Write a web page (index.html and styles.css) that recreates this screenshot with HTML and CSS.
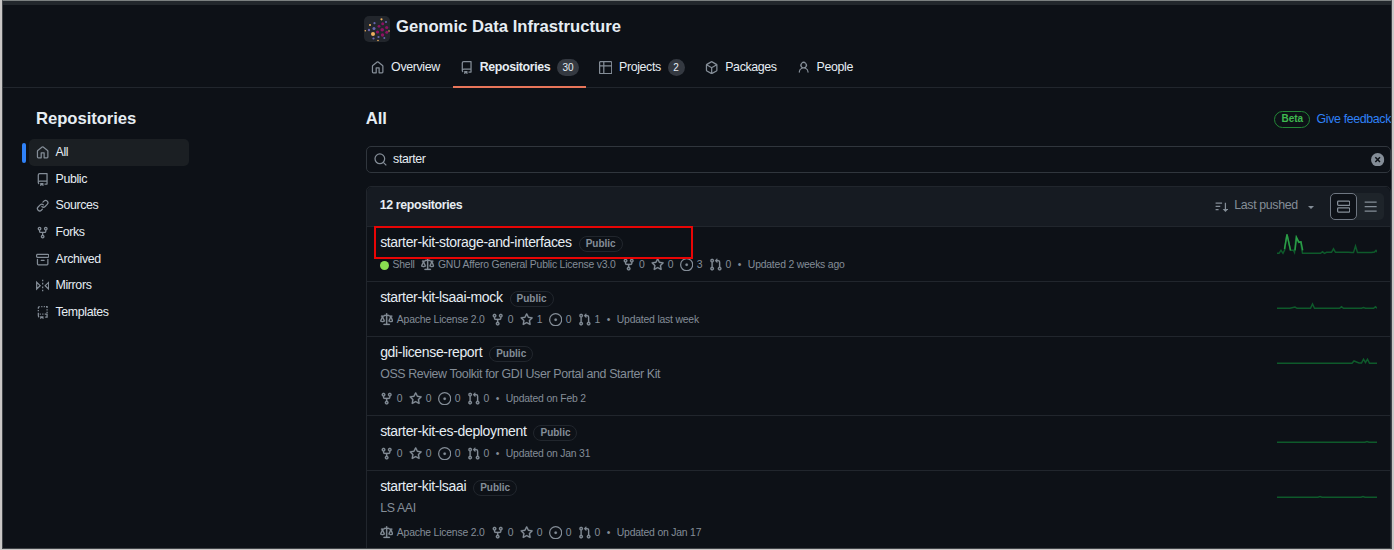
FILE: index.html
```
<!DOCTYPE html>
<html lang="en">
<head>
<meta charset="utf-8">
<title>Genomic Data Infrastructure repositories</title>
<link rel="stylesheet" href="styles.css">
</head>
<body>
<svg class="defs" aria-hidden="true">
<symbol id="home" viewBox="0 0 16 16"><path d="M6.906.664a1.749 1.749 0 0 1 2.187 0l5.25 4.2c.415.332.657.835.657 1.367v7.019A1.75 1.75 0 0 1 13.25 15h-3.5a.75.75 0 0 1-.75-.75V9H7v5.25a.75.75 0 0 1-.75.75h-3.5A1.75 1.75 0 0 1 1 13.25V6.23c0-.531.242-1.034.657-1.366l5.25-4.2Zm1.25 1.171a.25.25 0 0 0-.312 0l-5.25 4.2a.25.25 0 0 0-.094.196v7.019c0 .138.112.25.25.25H5.5V8.25a.75.75 0 0 1 .75-.75h3.5a.75.75 0 0 1 .75.75v5.25h2.75a.25.25 0 0 0 .25-.25V6.23a.25.25 0 0 0-.094-.195Z"/></symbol>
<symbol id="repo" viewBox="0 0 16 16"><path d="M2 2.5A2.5 2.5 0 0 1 4.5 0h8.75a.75.75 0 0 1 .75.75v12.5a.75.75 0 0 1-.75.75h-2.5a.75.75 0 0 1 0-1.5h1.75v-2h-8a1 1 0 0 0-.714 1.7.75.75 0 1 1-1.072 1.05A2.495 2.495 0 0 1 2 11.5Zm10.5-1h-8a1 1 0 0 0-1 1v6.708A2.486 2.486 0 0 1 4.5 9h8ZM5 12.25a.25.25 0 0 1 .25-.25h3.5a.25.25 0 0 1 .25.25v3.25a.25.25 0 0 1-.4.2l-1.45-1.087a.249.249 0 0 0-.3 0L5.4 15.7a.25.25 0 0 1-.4-.2Z"/></symbol>
<symbol id="table" viewBox="0 0 16 16"><path d="M0 1.75C0 .784.784 0 1.75 0h12.5C15.216 0 16 .784 16 1.75v12.5A1.75 1.75 0 0 1 14.25 16H1.75A1.75 1.75 0 0 1 0 14.25ZM6.5 6.5v8h7.75a.25.25 0 0 0 .25-.25V6.5Zm8-1.5V1.75a.25.25 0 0 0-.25-.25H6.5V5Zm-13 1.5v7.75c0 .138.112.25.25.25H5v-8ZM5 5V1.5H1.75a.25.25 0 0 0-.25.25V5Z"/></symbol>
<symbol id="package" viewBox="0 0 16 16"><path d="m8.878.392 5.25 3.045c.54.314.872.89.872 1.514v6.098a1.75 1.75 0 0 1-.872 1.514l-5.25 3.045a1.75 1.75 0 0 1-1.756 0l-5.25-3.045A1.75 1.75 0 0 1 1 11.049V4.951c0-.624.332-1.201.872-1.514L7.122.392a1.75 1.75 0 0 1 1.756 0ZM7.875 1.69l-4.63 2.685L8 7.133l4.755-2.758-4.63-2.685a.248.248 0 0 0-.25 0ZM2.5 5.677v5.372c0 .09.047.171.125.216l4.625 2.683V8.432Zm6.25 8.271 4.625-2.683a.25.25 0 0 0 .125-.216V5.677L8.75 8.432Z"/></symbol>
<symbol id="person" viewBox="0 0 16 16"><path d="M10.561 8.073a6.005 6.005 0 0 1 3.432 5.142.75.75 0 1 1-1.498.07 4.5 4.5 0 0 0-8.99 0 .75.75 0 0 1-1.498-.07 6.004 6.004 0 0 1 3.431-5.142 3.999 3.999 0 1 1 5.123 0ZM10.5 5a2.5 2.5 0 1 0-5 0 2.5 2.5 0 0 0 5 0Z"/></symbol>
<symbol id="link" viewBox="0 0 16 16"><path d="m7.775 3.275 1.25-1.25a3.5 3.5 0 1 1 4.95 4.95l-2.5 2.5a3.5 3.5 0 0 1-4.95 0 .751.751 0 0 1 .018-1.042.751.751 0 0 1 1.042-.018 1.998 1.998 0 0 0 2.83 0l2.5-2.5a2.002 2.002 0 0 0-2.83-2.83l-1.25 1.25a.751.751 0 0 1-1.042-.018.751.751 0 0 1-.018-1.042Zm-4.69 9.64a1.998 1.998 0 0 0 2.83 0l1.25-1.25a.751.751 0 0 1 1.042.018.751.751 0 0 1 .018 1.042l-1.25 1.25a3.5 3.5 0 1 1-4.95-4.95l2.5-2.5a3.5 3.5 0 0 1 4.95 0 .751.751 0 0 1-.018 1.042.751.751 0 0 1-1.042.018 1.998 1.998 0 0 0-2.83 0l-2.5 2.5a1.998 1.998 0 0 0 0 2.83Z"/></symbol>
<symbol id="fork" viewBox="0 0 16 16"><path d="M5 5.372v.878c0 .414.336.75.75.75h4.5a.75.75 0 0 0 .75-.75v-.878a2.25 2.25 0 1 1 1.5 0v.878a2.25 2.25 0 0 1-2.25 2.25h-1.5v2.128a2.251 2.251 0 1 1-1.5 0V8.5h-1.5A2.25 2.25 0 0 1 3.5 6.25v-.878a2.25 2.25 0 1 1 1.5 0ZM5 3.25a.75.75 0 1 0-1.5 0 .75.75 0 0 0 1.5 0Zm6.75.75a.75.75 0 1 0 0-1.5.75.75 0 0 0 0 1.5Zm-3 8.75a.75.75 0 1 0-1.5 0 .75.75 0 0 0 1.5 0Z"/></symbol>
<symbol id="archive" viewBox="0 0 16 16"><path d="M0 2.75C0 1.784.784 1 1.75 1h12.5c.966 0 1.75.784 1.75 1.75v1.5A1.75 1.75 0 0 1 14.25 6H1.75A1.75 1.75 0 0 1 0 4.25ZM1.75 7a.75.75 0 0 1 .75.75v5.5c0 .138.112.25.25.25h10.5a.25.25 0 0 0 .25-.25v-5.5a.75.75 0 0 1 1.5 0v5.5A1.75 1.75 0 0 1 13.25 15H2.75A1.75 1.75 0 0 1 1 13.25v-5.5A.75.75 0 0 1 1.75 7Zm0-4.5a.25.25 0 0 0-.25.25v1.5c0 .138.112.25.25.25h12.5a.25.25 0 0 0 .25-.25v-1.5a.25.25 0 0 0-.25-.25ZM6.25 8h3.5a.75.75 0 0 1 0 1.5h-3.5a.75.75 0 0 1 0-1.5Z"/></symbol>
<symbol id="mirror" viewBox="0 0 16 16"><path class="line" d="M.8 4v8L5 8ZM15.2 4v8L11 8ZM8 1v1.6M8 4.6v2M8 9v2M8 13v1.7"/></symbol>
<symbol id="template" viewBox="0 0 16 16"><path class="line" d="M2.8 3.2V2.500Q2.800.8 4.500.8M6.300.8h1.400M9.300.8h1.400M12 .8h1.300v1.700M13.300 4v1.500M13.300 7v1.500M2.800 4.800v1.500M2.800 8v3.500Q2.800 13 3.800 13.300M4.500 9.800h1.300M7.500 9.800h1.400M10.500 9.800h2.800v3.500h-2.300"/><path d="M5 12.200h4v3.600L7 14.500 5 15.800Z"/></symbol>
<symbol id="law" viewBox="0 0 16 16"><path d="M8.75.75V2h.985c.304 0 .603.08.867.231l1.29.736c.038.022.08.033.124.033h2.234a.75.75 0 0 1 0 1.5h-.427l2.111 4.692a.75.75 0 0 1-.154.838l-.076.069c-.21.176-.441.327-.686.45C14.556 10.78 13.88 11 13 11a4.498 4.498 0 0 1-2.023-.454 3.544 3.544 0 0 1-.686-.45l-.071-.065a.75.75 0 0 1-.154-.838L12.178 4.5h-.162c-.305 0-.604-.079-.868-.231l-1.29-.736a.245.245 0 0 0-.124-.033H8.75V13h2.5a.75.75 0 0 1 0 1.5h-6.5a.75.75 0 0 1 0-1.5h2.5V3.5h-.984a.245.245 0 0 0-.124.033l-1.289.737c-.265.15-.564.23-.869.23h-.162l2.112 4.692a.75.75 0 0 1-.154.838l-.071.065c-.21.176-.441.327-.686.45C4.556 10.78 3.88 11 3 11a4.498 4.498 0 0 1-2.023-.454 3.544 3.544 0 0 1-.686-.45l-.071-.065a.75.75 0 0 1-.154-.838L2.178 4.5H1.75a.75.75 0 0 1 0-1.5h2.234a.249.249 0 0 0 .125-.033l1.288-.737c.265-.15.564-.23.869-.23h.984V.75a.75.75 0 0 1 1.5 0Zm2.945 8.477c.285.135.718.273 1.305.273s1.02-.138 1.305-.273L13 6.327Zm-10 0c.285.135.718.273 1.305.273s1.02-.138 1.305-.273L3 6.327Z"/></symbol>
<symbol id="star" viewBox="0 0 16 16"><path d="M8 .25a.75.75 0 0 1 .673.418l1.882 3.815 4.21.612a.75.75 0 0 1 .416 1.279l-3.046 2.97.719 4.192a.751.751 0 0 1-1.088.791L8 12.347l-3.766 1.98a.75.75 0 0 1-1.088-.79l.72-4.194L.818 6.374a.75.75 0 0 1 .416-1.28l4.21-.611L7.327.668A.75.75 0 0 1 8 .25Zm0 2.445L6.615 5.5a.75.75 0 0 1-.564.41l-3.097.45 2.24 2.184a.75.75 0 0 1 .216.664l-.528 3.084 2.769-1.456a.75.75 0 0 1 .698 0l2.77 1.456-.53-3.084a.75.75 0 0 1 .216-.664l2.24-2.183-3.096-.45a.75.75 0 0 1-.564-.41L8 2.694Z"/></symbol>
<symbol id="issue" viewBox="0 0 16 16"><circle class="line" cx="8" cy="8" r="7.25"/><circle cx="8" cy="8" r="1.5"/></symbol>
<symbol id="pull" viewBox="0 0 16 16"><path d="M1.5 3.25a2.25 2.25 0 1 1 3 2.122v5.256a2.251 2.251 0 1 1-1.5 0V5.372A2.25 2.25 0 0 1 1.5 3.25Zm5.677-.177L9.573.677A.25.25 0 0 1 10 .854V2.5h1A2.5 2.5 0 0 1 13.5 5v5.628a2.251 2.251 0 1 1-1.5 0V5a1 1 0 0 0-1-1h-1v1.646a.25.25 0 0 1-.427.177L7.177 3.427a.25.25 0 0 1 0-.354ZM3.75 2.5a.75.75 0 1 0 0 1.5.75.75 0 0 0 0-1.5Zm0 9.5a.75.75 0 1 0 0 1.5.75.75 0 0 0 0-1.5Zm8.25.75a.75.75 0 1 0 1.5 0 .75.75 0 0 0-1.5 0Z"/></symbol>
<symbol id="search" viewBox="0 0 16 16"><circle class="line" cx="7" cy="7" r="5.8"/><path class="line" d="m11.2 11.2 3.6 3.6"/></symbol>
<symbol id="clear" viewBox="0 0 16 16"><circle cx="8" cy="8" r="8"/><path class="cross" d="m5.2 5.2 5.6 5.6M10.8 5.2l-5.6 5.6"/></symbol>
<symbol id="sort" viewBox="0 0 16 16"><path class="line" d="M.7 3.7h7.8M.7 7.7h5.6M.7 11.7h3.6M12.5 3.2v9"/><path d="M9.2 10.8h6.6L12.5 14.5Z"/></symbol>
<symbol id="rows" viewBox="0 0 16 16"><rect class="line" x=".75" y="1.5" width="14.5" height="5" rx="1"/><rect class="line" x=".75" y="9.5" width="14.5" height="5" rx="1"/></symbol>
<symbol id="lines" viewBox="0 0 16 16"><path class="line" d="M.8 2.5h14.4M.8 8h14.4M.8 13.5h14.4"/></symbol>
</svg>

<div class="frame">
  <header class="header">
    <div class="org">
      <svg class="avatar" viewBox="0 0 26 26">
        <g fill="#efb05e"><circle cx="17.5" cy="3.3" r="1.1"/><circle cx="6" cy="9" r="1.1"/><circle cx="1.3" cy="14.8" r=".8"/><circle cx="9" cy="18" r="2"/><circle cx="25" cy="15" r=".8"/><circle cx="14" cy="24.5" r=".8"/></g>
        <g fill="#6765ad"><circle cx="10.5" cy="7.2" r="1.1"/><circle cx="22" cy="6" r="1.1"/><circle cx="5" cy="14" r="1.2"/><circle cx="10" cy="12.5" r="1.5"/><circle cx="14.5" cy="21" r="1.1"/><circle cx="9.5" cy="22.5" r="1.1"/><circle cx="20.3" cy="22" r="1"/></g>
        <g fill="#8c1263"><circle cx="18.7" cy="7.8" r="1.5"/><circle cx="15" cy="10.3" r="1.4"/><circle cx="22.7" cy="11.5" r="1.6"/><circle cx="18.2" cy="13.8" r="1.8"/><circle cx="13.5" cy="16" r="1.6"/><circle cx="22.8" cy="16.3" r="1.5"/><circle cx="18.5" cy="19" r="1.7"/></g>
      </svg>
      <h1 class="org-name">Genomic Data Infrastructure</h1>
    </div>
    <nav class="tabs">
      <a class="tab tab-overview"><svg class="icon"><use href="#home"/></svg><span>Overview</span></a>
      <a class="tab tab-repos current"><svg class="icon"><use href="#repo"/></svg><span>Repositories</span><span class="count">30</span></a>
      <a class="tab tab-projects"><svg class="icon"><use href="#table"/></svg><span>Projects</span><span class="count">2</span></a>
      <a class="tab tab-packages"><svg class="icon"><use href="#package"/></svg><span>Packages</span></a>
      <a class="tab"><svg class="icon"><use href="#person"/></svg><span>People</span></a>
    </nav>
  </header>

  <div class="body">
    <aside class="side">
      <h2 class="heading">Repositories</h2>
      <ul class="filters">
        <li class="filter selected"><svg class="icon"><use href="#home"/></svg><span>All</span></li>
        <li class="filter"><svg class="icon"><use href="#repo"/></svg><span>Public</span></li>
        <li class="filter"><svg class="icon"><use href="#link"/></svg><span>Sources</span></li>
        <li class="filter"><svg class="icon"><use href="#fork"/></svg><span>Forks</span></li>
        <li class="filter"><svg class="icon"><use href="#archive"/></svg><span>Archived</span></li>
        <li class="filter"><svg class="icon"><use href="#mirror"/></svg><span>Mirrors</span></li>
        <li class="filter"><svg class="icon"><use href="#template"/></svg><span>Templates</span></li>
      </ul>
    </aside>

    <main class="main">
      <div class="main-head">
        <h2 class="heading">All</h2>
        <div class="feedback"><span class="beta">Beta</span><a class="feedback-link">Give feedback</a></div>
      </div>
      <div class="search"><svg class="icon"><use href="#search"/></svg><span class="query">starter</span><svg class="icon clear"><use href="#clear"/></svg></div>
      <section class="list">
        <div class="list-head">
          <strong class="total">12 repositories</strong>
          <div class="sort"><svg class="icon"><use href="#sort"/></svg><span>Last pushed</span><i class="caret"></i></div>
          <div class="views"><span class="view active"><svg class="icon"><use href="#rows"/></svg></span><span class="view"><svg class="icon"><use href="#lines"/></svg></span></div>
        </div>

        <article class="repo">
          <div class="highlight"></div>
          <div class="repo-info">
            <div class="repo-title"><a class="repo-name">starter-kit-storage-and-interfaces</a><span class="badge">Public</span></div>
            <div class="meta"><span class="stat lang"><i class="lang-dot"></i>Shell</span><span class="stat"><svg class="icon"><use href="#law"/></svg>GNU Affero General Public License v3.0</span><span class="stat"><svg class="icon"><use href="#fork"/></svg>0</span><span class="stat"><svg class="icon"><use href="#star"/></svg>0</span><span class="stat"><svg class="icon"><use href="#issue"/></svg>3</span><span class="stat"><svg class="icon"><use href="#pull"/></svg>0</span><span class="sep">•</span><span>Updated 2 weeks ago</span></div>
          </div>
          <svg class="spark" viewBox="0 0 100 25"><path d="M0 23.300h2l2-3 2 3 1.500-3 2.500-16 3.500 16h3l1 2 1.500-15 2.500 5 2-.5 2 11.500h18l2-1.500 2 1.500 2-1h5l2-3.500 2 3.500h13l3 .3h2l2-6.500 2 6.500h14l3-.5 1.500-1.700 1.500 2"/><path class="glow" d="M7.500 19 10 4.300l3.500 16M18 20.300l1.500-13 2.500 5 2-.5 1.700 8.500"/></svg>
        </article>

        <article class="repo">
          <div class="repo-info">
            <div class="repo-title"><a class="repo-name">starter-kit-lsaai-mock</a><span class="badge">Public</span></div>
            <div class="meta"><span class="stat"><svg class="icon"><use href="#law"/></svg>Apache License 2.0</span><span class="stat"><svg class="icon"><use href="#fork"/></svg>0</span><span class="stat"><svg class="icon"><use href="#star"/></svg>1</span><span class="stat"><svg class="icon"><use href="#issue"/></svg>0</span><span class="stat"><svg class="icon"><use href="#pull"/></svg>1</span><span class="sep">•</span><span>Updated last week</span></div>
          </div>
          <svg class="spark" viewBox="0 0 100 25"><path d="M0 23.300h13l5-1.300 2 1.300h13.500l2-4.300 2 4.300h25l2-1.500 2 1.500h18l2-.7 2 .7h8l2-1.500 1.500 1.500"/></svg>
        </article>

        <article class="repo tall">
          <div class="repo-info">
            <div class="repo-title"><a class="repo-name">gdi-license-report</a><span class="badge">Public</span></div>
            <p class="desc">OSS Review Toolkit for GDI User Portal and Starter Kit</p>
            <div class="meta"><span class="stat"><svg class="icon"><use href="#fork"/></svg>0</span><span class="stat"><svg class="icon"><use href="#star"/></svg>0</span><span class="stat"><svg class="icon"><use href="#issue"/></svg>0</span><span class="stat"><svg class="icon"><use href="#pull"/></svg>0</span><span class="sep">•</span><span>Updated on Feb 2</span></div>
          </div>
          <svg class="spark" viewBox="0 0 100 25"><path d="M0 23.300h75l2-2.300 5 2h2.500l2-3.800 2 3.300 2-3.300 2 4.100h7.500"/></svg>
        </article>

        <article class="repo">
          <div class="repo-info">
            <div class="repo-title"><a class="repo-name">starter-kit-es-deployment</a><span class="badge">Public</span></div>
            <div class="meta"><span class="stat"><svg class="icon"><use href="#fork"/></svg>0</span><span class="stat"><svg class="icon"><use href="#star"/></svg>0</span><span class="stat"><svg class="icon"><use href="#issue"/></svg>0</span><span class="stat"><svg class="icon"><use href="#pull"/></svg>0</span><span class="sep">•</span><span>Updated on Jan 31</span></div>
          </div>
          <svg class="spark" viewBox="0 0 100 25"><path d="M0 23.300h88l2-.8 2 .8h8"/></svg>
        </article>

        <article class="repo tall">
          <div class="repo-info">
            <div class="repo-title"><a class="repo-name">starter-kit-lsaai</a><span class="badge">Public</span></div>
            <p class="desc">LS AAI</p>
            <div class="meta"><span class="stat"><svg class="icon"><use href="#law"/></svg>Apache License 2.0</span><span class="stat"><svg class="icon"><use href="#fork"/></svg>0</span><span class="stat"><svg class="icon"><use href="#star"/></svg>0</span><span class="stat"><svg class="icon"><use href="#issue"/></svg>0</span><span class="stat"><svg class="icon"><use href="#pull"/></svg>0</span><span class="sep">•</span><span>Updated on Jan 17</span></div>
          </div>
          <svg class="spark" viewBox="0 0 100 25"><path d="M0 23.300h41l2-.8 2 .8h39l2-.8 2 .8h12"/></svg>
        </article>
      </section>
    </main>
  </div>
</div>
</body>
</html>
```
FILE: styles.css
```
* { box-sizing: border-box; }
body {
  margin: 0;
  height: 550px;
  overflow: hidden;
  background: #c9c7c6;
  color: #e6edf3;
  font: 12.4px/17px "Liberation Sans", Arial, sans-serif;
  letter-spacing: -.37px;
}
h1, h2, p, ul { margin: 0; padding: 0; }
ul { list-style: none; }
.defs { position: absolute; width: 0; height: 0; }
.icon { display: block; flex: none; width: 13.33px; height: 13.33px; fill: #848d97; color: #848d97; }
.line { fill: none; stroke: #848d97; stroke-width: 1.5; }
.cross { fill: none; stroke: #0d1117; stroke-width: 1.8; }

.frame {
  width: 1390px;
  height: 549px;
  margin-left: 2px;
  overflow: hidden;
  background: #0d1117;
  border-top: 1px solid #7b8080;
  border-left: 1px solid #3f4347;
  border-right: 1px solid #3f4347;
  border-bottom: 1px solid #3f4347;
}
.header { height: 87px; border-top: 4px solid #22272c; border-bottom: 1px solid #21262d; }
.org { display: flex; gap: 6px; padding: 11px 0 0 361px; height: 43px; }
.avatar { width: 26px; height: 26px; border-radius: 5px; background: #22262c; }
.org-name { font-size: 16.67px; line-height: 22px; font-weight: 700; letter-spacing: 0; }

.tabs { display: flex; height: 39px; padding-left: 361.5px; }
.tab { display: flex; height: 39px; padding: 0 6.6px; gap: 6.7px; position: relative; }
.tab .icon { margin-top: 13px; }
.tab span { line-height: 38px; }
.tab .count { min-width: 17px; height: 17px; margin-top: 11px; padding: 0 5.5px; border-radius: 9px; background: #343941; font-size: 10px; font-weight: 400; line-height: 17px; text-align: center; letter-spacing: 0; }
.current { font-weight: 700; }
.current::after { content: ""; position: absolute; left: 0; right: 0; bottom: -1px; height: 2px; background: #e8755a; }
.tab-overview, .tab-repos, .tab-projects, .tab-packages { margin-right: 6.7px; }
.tab-projects { margin-right: 7.5px; }

.body { display: flex; }
.side { width: 363px; padding: 21px 0 0 26px; }
.heading { font-size: 16.67px; line-height: 20px; font-weight: 700; letter-spacing: -.05px; }
.side .heading { padding-left: 7px; }
.filters { padding-top: 10px; }
.filter { display: flex; width: 160px; height: 26.67px; padding: 7px 0 0 7px; gap: 6.2px; line-height: 12px; position: relative; }
.selected { background: #1b1f23; border-radius: 5px; }
.selected::before { content: ""; position: absolute; left: -7px; top: 4px; width: 4px; height: 20px; border-radius: 4px; background: #2f81f7; }

.main { width: 1026px; padding-top: 20px; }
.main-head { display: flex; justify-content: space-between; height: 38px; padding-top: 1px; }
.feedback { display: flex; gap: 6.5px; }
.beta { height: 17px; margin-top: 2px; padding: 0 6px; border: 1px solid #238636; border-radius: 9px; color: #3fb950; font-size: 10px; font-weight: 700; line-height: 14px; letter-spacing: 0; }
.feedback-link { color: #2f81f7; line-height: 20px; }
.search { display: flex; width: 1025px; height: 27px; padding: 6px 5px 0 7px; border: 1px solid #30363d; border-radius: 5px; }
.query { flex: 1; margin-left: 6px; line-height: 12px; }
.list { width: 1025px; margin-top: 13px; border: 1px solid #21262d; border-radius: 5px 5px 0 0; }
.list-head { display: flex; height: 39px; padding-left: 13px; background: #161b22; border-radius: 5px 5px 0 0; }
.total { flex: 1; line-height: 36px; }
.sort { display: flex; gap: 6px; color: #848d97; line-height: 36px; }
.sort .icon { margin-top: 13px; }
.caret { width: 0; height: 0; margin: 19px 0 0 4px; border: 3.5px solid transparent; border-top-color: #848d97; border-bottom: 0; }
.views { display: flex; height: 27px; margin: 6px 6px 0 16px; background: #1e242a; border-radius: 5px; }
.view { width: 27px; padding: 7px 0 0 6.8px; }
.active { padding: 6px 0 0 5.8px; border: 1px solid #6e7681; border-radius: 5px; background: #0d1117; }

.repo { display: flex; justify-content: space-between; height: 55px; padding: 0 13px 0 13.4px; border-top: 1px solid #21262d; position: relative; }
.tall { height: 79px; }
.repo-title { display: flex; height: 31px; padding-top: 6px; gap: 7px; }
.repo-name { font-size: 14px; line-height: 18px; letter-spacing: -.34px; }
.badge { height: 16px; margin-top: 3px; padding: 0 6px; border: 1px solid #21262d; border-radius: 9px; color: #848d97; font-size: 10px; font-weight: 700; line-height: 14px; letter-spacing: 0; }
.desc { height: 24px; color: #848d97; line-height: 13px; }
.meta { display: flex; height: 15px; color: #848d97; font-size: 10.4px; letter-spacing: -.2px; line-height: 13px; white-space: nowrap; }
.stat { display: flex; gap: 3.4px; margin-right: 6.6px; }
.meta .icon { stroke: #848d97; stroke-width: .25; }
.lang-dot { width: 9px; height: 9px; margin-top: 3px; border-radius: 50%; background: #89e051; }
.sep { margin-right: 6.6px; }
.spark { width: 100px; height: 25px; margin-top: 3px; }
.spark path { fill: none; stroke: #0e5a2b; stroke-width: 1.5; }
.spark .glow { stroke: #2c9c47; }
.highlight { position: absolute; left: 7px; top: -1px; width: 319px; height: 33px; border: 2px solid #e80505; }
```
